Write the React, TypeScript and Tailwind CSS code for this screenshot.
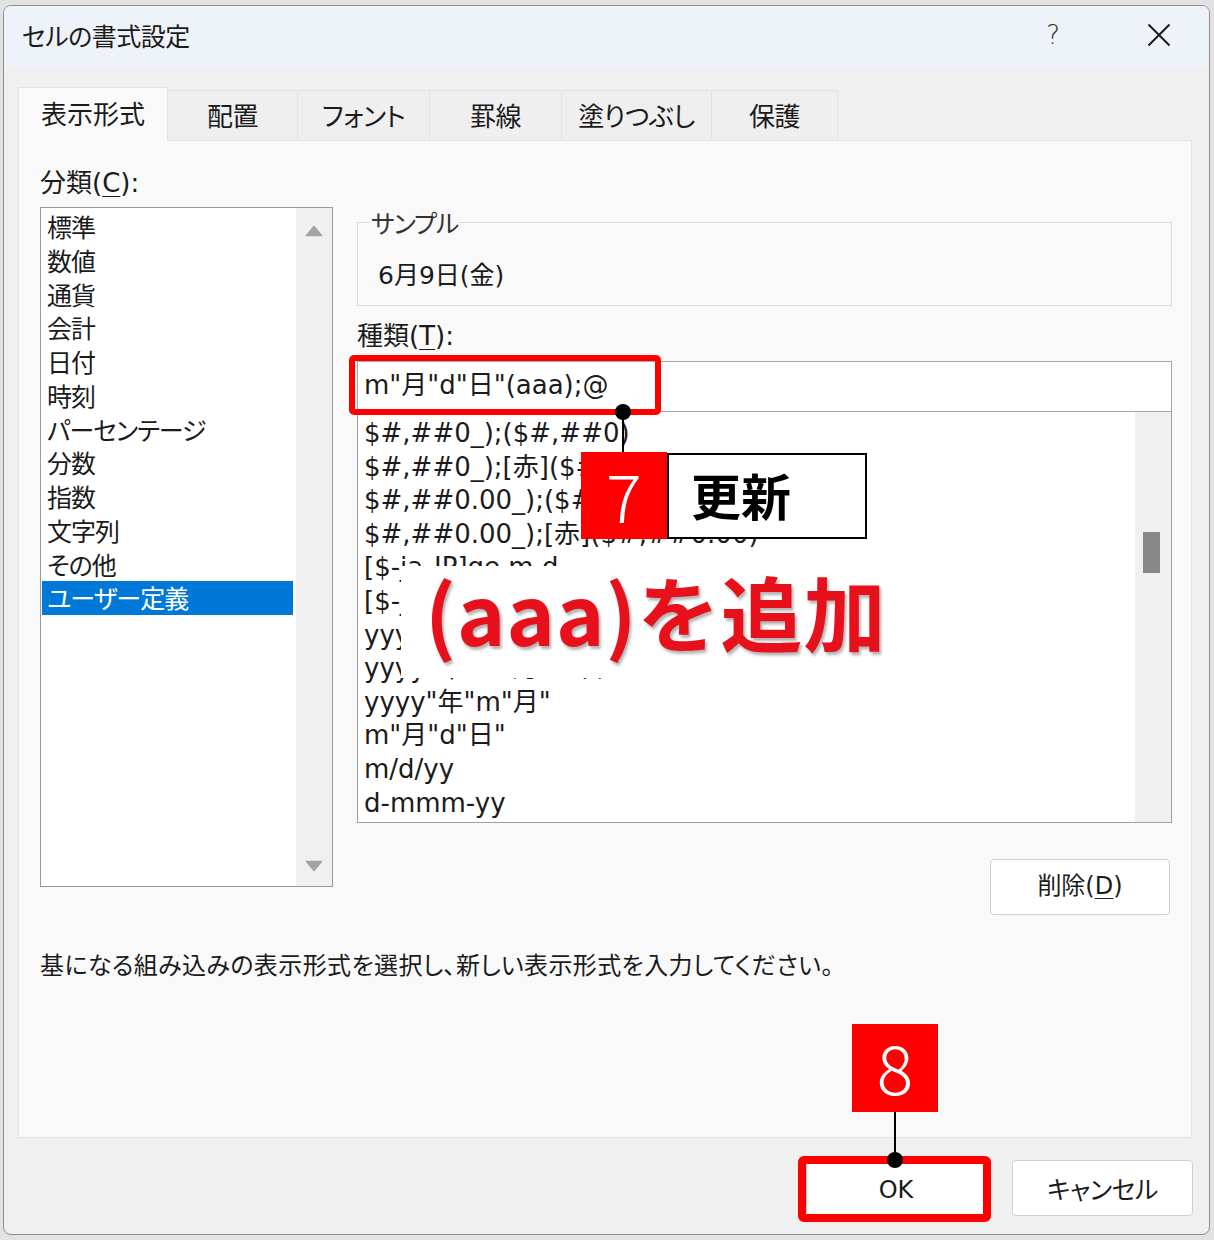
import React from "react";

const JP = "font-['Noto_Sans_CJK_JP',sans-serif] [font-feature-settings:'palt']";
const MIX = "font-['DejaVu_Sans','Noto_Sans_CJK_JP',sans-serif] [font-feature-settings:'palt']";

const categories = [
  "標準",
  "数値",
  "通貨",
  "会計",
  "日付",
  "時刻",
  "パーセンテージ",
  "分数",
  "指数",
  "文字列",
  "その他",
  "ユーザー定義",
];

const formats = [
  "$#,##0_);($#,##0)",
  "$#,##0_);[赤]($#,##0)",
  "$#,##0.00_);($#,##0.00)",
  "$#,##0.00_);[赤]($#,##0.00)",
  "[$-ja-JP]ge.m.d",
  '[$-ja-JP]ggge"年"m"月"d"日"',
  "yyyy/m/d",
  'yyyy"年"m"月"d"日"',
  'yyyy"年"m"月"',
  'm"月"d"日"',
  "m/d/yy",
  "d-mmm-yy",
];

const tabs = [
  { label: "配置", w: "w-[130px]" },
  { label: "フォント", w: "w-[132px]" },
  { label: "罫線", w: "w-[132px]" },
  { label: "塗りつぶし", w: "w-[150px]" },
  { label: "保護", w: "w-[126px]" },
];

export default function App() {
  return (
    <div className="relative w-[1214px] h-[1240px] overflow-hidden bg-[#e2e2e2] pt-[5px] pl-[3px]">
      <div className="w-[1207px] h-[1230px] rounded-[8px] border border-[#8e8e8e] bg-[#f0f0f0] overflow-hidden flex flex-col text-[#1b1b1b]">
        {/* Title bar */}
        <div className="h-[62px] shrink-0 bg-[#eef3f9] flex items-center pl-[18px] pr-[38px] pb-[4px]">
          <span className={`${JP} text-[25px] leading-none tracking-[-0.5px]`}>セルの書式設定</span>
          <span className="ml-auto font-['DejaVu_Sans',sans-serif] font-light text-[26px] leading-none text-[#333]">?</span>
          <svg className="ml-[87px]" width="24" height="24" viewBox="0 0 24 24">
            <path d="M1.5 1.5 L22.5 22.5 M22.5 1.5 L1.5 22.5" stroke="#1a1a1a" strokeWidth="2" fill="none" />
          </svg>
        </div>

        {/* Tabs */}
        <div className="relative z-10 mt-[19px] ml-[14px] flex items-end h-[54px] -mb-px">
          <div className={`${JP} w-[150px] h-[54px] bg-[#f9f9f9] border border-b-0 border-[#e3e3e3] flex items-center justify-center text-[26px] pb-[4px]`}>
            表示形式
          </div>
          {tabs.map((t) => (
            <div
              key={t.label}
              className={`${JP} ${t.w} h-[51px] bg-[#efefef] border-t border-r border-b border-[#e3e3e3] flex items-center justify-center text-[26px] tracking-[-0.5px] pb-[2px]`}
            >
              {t.label}
            </div>
          ))}
        </div>

        {/* Panel */}
        <div className="ml-[14px] w-[1174px] h-[998px] shrink-0 border border-[#e3e3e3] bg-[#f9f9f9] pl-[21px]">
          <div className="flex items-start">
            {/* Left column */}
            <div className="w-[293px] shrink-0">
              <div className={`${MIX} mt-[24px] text-[26px] leading-[36px]`}>
                分類(<span className="underline underline-offset-[4px] decoration-1">C</span>):
              </div>
              <div className="mt-[6px] h-[680px] border border-[#9a9a9a] bg-white flex">
                <div className="flex-1 pl-[1px] pr-[3px] pt-[2px]">
                  {categories.map((c, i) => (
                    <div
                      key={c}
                      className={`${JP} h-[33.75px] leading-[33.75px] text-[25px] pl-[5px] tracking-[-1px] ${
                        i === categories.length - 1 ? "bg-[#0078d7] text-white" : ""
                      }`}
                    >
                      {c}
                    </div>
                  ))}
                </div>
                <div className="w-[36px] bg-[#f0f0f0] flex flex-col items-center justify-between pt-[17px] pb-[14px]">
                  <svg width="18" height="12" viewBox="0 0 18 12">
                    <path d="M9 1.5 L16.5 10.5 L1.5 10.5 Z" fill="#a3a3a3" stroke="#a3a3a3" strokeWidth="1.5" strokeLinejoin="round" />
                  </svg>
                  <svg width="18" height="12" viewBox="0 0 18 12">
                    <path d="M1.5 1.5 L16.5 1.5 L9 10.5 Z" fill="#a3a3a3" stroke="#a3a3a3" strokeWidth="1.5" strokeLinejoin="round" />
                  </svg>
                </div>
              </div>
            </div>

            {/* Right column */}
            <div className="ml-[24px] w-[815px] shrink-0 flex flex-col">
              <fieldset className="mt-[68px] border border-[#dcdcdc] px-[12px] pb-[12px]">
                <legend className={`${JP} text-[25px] leading-[26px] px-[1px] text-[#333] tracking-[-1px]`}>サンプル</legend>
                <div className={`${MIX} mt-[24px] ml-[8px] text-[25px] leading-[34px]`}>6月9日(金)</div>
              </fieldset>

              <div className={`${MIX} mt-[13px] text-[26px] leading-[34px]`}>
                種類(<span className="underline underline-offset-[4px] decoration-1">T</span>):
              </div>

              <div className="mt-[8px] h-[51px] border border-[#a6a6a6] bg-white flex items-center pl-[6px] pb-[3px]">
                <span className={`${MIX} text-[26px] leading-none`}>m"月"d"日"(aaa);@</span>
              </div>

              <div className="h-[411px] border-x border-b border-[#a0a0a0] bg-white flex">
                <div className="flex-1 pl-[6px] pt-[5px] overflow-hidden">
                  {formats.map((f) => (
                    <div key={f} className={`${MIX} h-[33.6px] leading-[33.6px] text-[26px] whitespace-nowrap`}>
                      {f}
                    </div>
                  ))}
                </div>
                <div className="w-[36px] bg-[#f0f0f0] pt-[120px] pl-[8px]">
                  <div className="w-[17px] h-[41px] bg-[#878787]" />
                </div>
              </div>

              <button className={`${MIX} self-end mr-[2px] mt-[36px] w-[180px] h-[56px] bg-white border border-[#d0d0d0] rounded-[4px] text-[24px] pb-[2px]`}>
                削除(<span className="underline underline-offset-[4px] decoration-1">D</span>)
              </button>
            </div>
          </div>

          <div className={`${JP} mt-[32px] text-[24px] leading-[34px] tracking-[0.4px]`}>
            基になる組み込みの表示形式を選択し、新しい表示形式を入力してください。
          </div>
        </div>

        {/* Bottom buttons */}
        <div className="flex justify-end gap-[26px] pr-[16px] pt-[22px]">
          <button className={`${MIX} w-[180px] h-[56px] bg-white border border-[#d0d0d0] rounded-[4px] text-[24px] pt-[3px]`}>OK</button>
          <button className={`${JP} w-[181px] h-[56px] bg-white border border-[#d0d0d0] rounded-[4px] text-[25px] tracking-[-0.5px] pt-[2px]`}>キャンセル</button>
        </div>
      </div>

      {/* Annotation overlays */}
      <div className="absolute left-[349px] top-[355px] w-[312px] h-[60px] border-[6px] border-[#ff0000] rounded-[5px]" />
      <div className="absolute left-[622px] top-[412px] w-[2px] h-[41px] bg-black" />
      <div className="absolute left-[615px] top-[404px] w-[16px] h-[16px] rounded-full bg-black" />

      <div className="absolute left-[581px] top-[452px] flex">
        <div className="w-[86px] h-[87px] bg-[#ff0000] flex items-center justify-center">
          <span className="font-['Noto_Sans_CJK_JP',sans-serif] font-light text-white text-[66px] leading-none pb-[4px]">7</span>
        </div>
        <div className="w-[200px] h-[86px] mt-[1px] bg-white border-2 border-black flex items-center pl-[22px]">
          <span className="font-['Noto_Sans_CJK_JP',sans-serif] font-bold text-black text-[50px] leading-none pb-[4px]">更新</span>
        </div>
      </div>

      <div className="absolute left-[401px] top-[566px] w-[486px] h-[112px] bg-white flex items-center pl-[24px] pb-[22px]">
        <span className="font-['Noto_Sans_CJK_JP',sans-serif] font-bold text-[#e8101a] text-[82px] leading-none tracking-[1px] [text-shadow:2px_3px_3px_rgba(0,0,0,0.3)]">
          (aaa)を追加
        </span>
      </div>

      <div className="absolute left-[852px] top-[1024px] w-[86px] h-[88px] bg-[#ff0000] flex items-center justify-center">
        <span className="font-['Noto_Sans_CJK_JP',sans-serif] font-light text-white text-[68px] leading-none pb-[4px]">8</span>
      </div>
      <div className="absolute left-[894px] top-[1112px] w-[2px] h-[49px] bg-black" />
      <div className="absolute left-[798px] top-[1156px] w-[193px] h-[66px] border-[8px] border-[#ff0000] rounded-[6px]" />
      <div className="absolute left-[887px] top-[1152px] w-[16px] h-[16px] rounded-full bg-black" />
    </div>
  );
}
